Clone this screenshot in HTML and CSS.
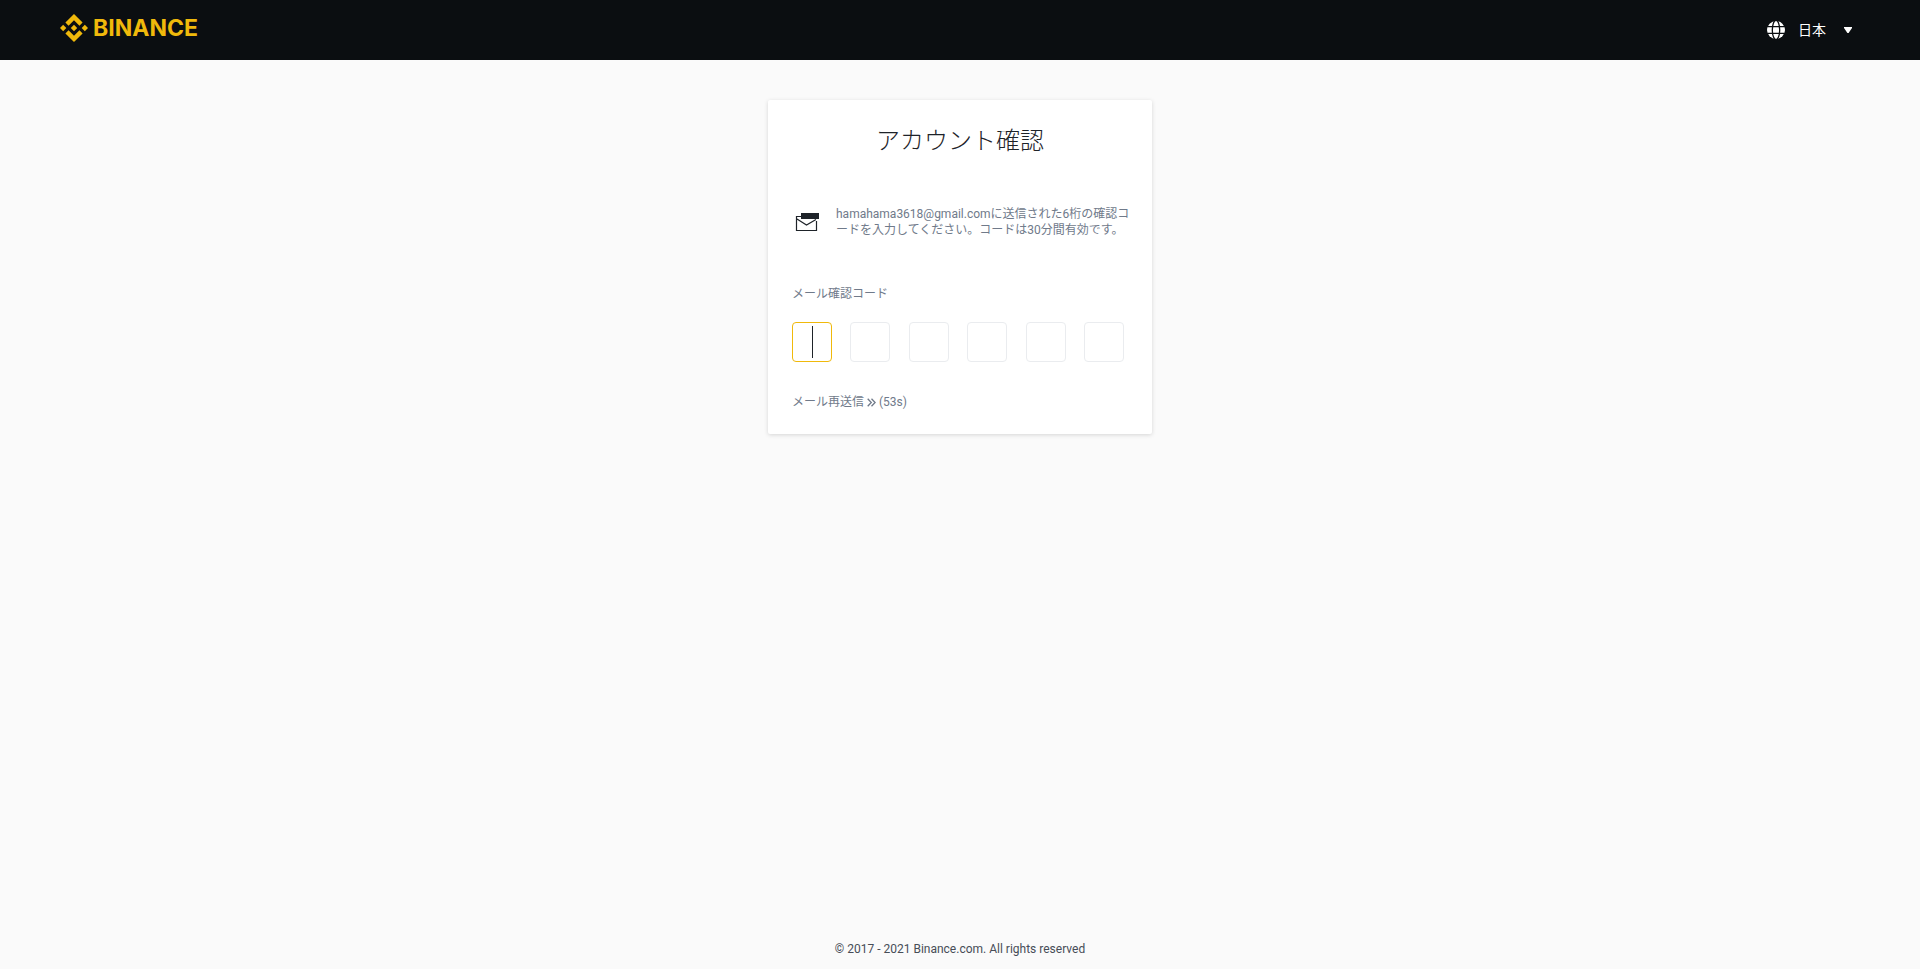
FILE: index.html
```html
<!DOCTYPE html>
<html lang="ja">
<head>
    <meta charset="UTF-8">
    <meta name="viewport" content="width=device-width, initial-scale=1.0">
    <title>アカウント確認 | Binance</title>
    <link rel="stylesheet" href="styles.css">
</head>
<body>
    <header class="header">
        <a class="logo" href="#">
            <svg class="logo-mark" viewBox="0 0 126.61 126.61" aria-hidden="true">
                <path d="M38.73 53.2 63.3 28.63l24.58 24.58 14.3-14.3L63.3 0 24.43 38.9z"/>
                <path d="M0 63.31 14.3 49l14.3 14.31-14.3 14.3z"/>
                <path d="M38.73 73.41 63.3 98l24.58-24.59 14.31 14.29-38.89 38.91L24.43 87.73z"/>
                <path d="M98 63.31l14.3-14.3 14.3 14.3-14.3 14.3z"/>
                <path d="M77.83 63.3 63.3 48.78 48.8 63.3l14.5 14.52z"/>
            </svg>
            <span>BINANCE</span>
        </a>
        <button type="button" class="language">
            <svg class="globe" viewBox="0 0 18 18" aria-hidden="true">
                <circle cx="9" cy="9" r="9" fill="#fff"/>
                <g fill="none" stroke="#0b0e11" stroke-width="1.3">
                    <path d="M0 5.7h18M0 12.3h18"/>
                    <ellipse cx="9" cy="9" rx="3.7" ry="9.6"/>
                </g>
            </svg>
            <span>日本</span>
            <svg class="arrow" viewBox="0 0 8 6" aria-hidden="true">
                <path d="M0 0h8v1L4.6 6H3.4L0 1z" fill="#fff"/>
            </svg>
        </button>
    </header>

    <main class="main">
        <form class="card">
            <h1>アカウント確認</h1>
            <div class="notice">
                <svg class="mail" viewBox="0 0 26 20" aria-hidden="true">
                    <path d="M7 4.5H1.500v14h20V9M2 7l9.500 6L21 7.500" fill="none" stroke="#1e2329" stroke-width="1.2"/>
                    <path d="M6 1h18v6H6z" fill="#1e2329"/>
                </svg>
                <p>hamahama3618@gmail.comに送信された6桁の確認コードを入力してください。コードは30分間有効です。</p>
            </div>
            <label for="code1">メール確認コード</label>
            <div class="code">
                <input class="active" type="text" id="code1" maxlength="1" inputmode="numeric">
                <input type="text" maxlength="1" inputmode="numeric" aria-label="2桁目">
                <input type="text" maxlength="1" inputmode="numeric" aria-label="3桁目">
                <input type="text" maxlength="1" inputmode="numeric" aria-label="4桁目">
                <input type="text" maxlength="1" inputmode="numeric" aria-label="5桁目">
                <input type="text" maxlength="1" inputmode="numeric" aria-label="6桁目">
            </div>
            <button type="button" class="resend">
                <span>メール再送信</span>
                <svg class="chevrons" viewBox="0 0 9 9" aria-hidden="true">
                    <path d="M.7.7l3.600 3.800L.7 8.300M4.500.7l3.600 3.800-3.600 3.800" fill="none" stroke="#707a8a" stroke-width="1.3"/>
                </svg>
                <span>(53s)</span>
            </button>
        </form>
    </main>

    <footer class="footer">© 2017 - 2021 Binance.com. All rights reserved</footer>
</body>
</html>
```

FILE: styles.css
```css
* {
    box-sizing: border-box;
}
body {
    display: flex;
    flex-direction: column;
    min-height: 100vh;
    margin: 0;
    background-color: #fafafa;
    color: #1e2329;
    font-family: Roboto, "Noto Sans CJK JP", sans-serif;
    font-size: 12px;
    line-height: 16px;
}
button {
    padding: 0;
    background: none;
    border: none;
    font: inherit;
    cursor: pointer;
}
.header {
    display: flex;
    align-items: center;
    justify-content: space-between;
    height: 60px;
    padding: 0 68px 0 60px;
    background-color: #0b0e11;
}
.logo {
    display: flex;
    align-items: center;
    gap: 5px;
    padding-bottom: 4px;
    color: #f0b90b;
    font-family: Inter, sans-serif;
    font-size: 23px;
    font-weight: 700;
    line-height: 28px;
    text-decoration: none;
}
.logo-mark {
    width: 28px;
    height: 28px;
    fill: #f0b90b;
}
.language {
    display: flex;
    align-items: center;
    color: #fff;
    font-size: 14px;
}
.globe {
    width: 18px;
    height: 18px;
    margin-right: 13px;
}
.arrow {
    width: 8px;
    height: 6px;
    margin-left: 18px;
}
.main {
    flex: 1;
    padding: 40px 16px;
}
.card {
    max-width: 384px;
    margin: 0 auto;
    padding: 24px;
    background-color: #fff;
    border-radius: 2px;
    box-shadow: 0 1px 4px rgba(0, 0, 0, 0.15);
}
h1 {
    margin: 0 0 46px;
    font-size: 24px;
    font-weight: 300;
    line-height: 34px;
    text-align: center;
}
.notice {
    display: flex;
    align-items: center;
    gap: 15px;
    margin: 0 -4px 46px 0;
    padding-left: 3px;
    color: #707a8a;
}
.notice p {
    flex: 1;
    margin: 0;
    padding: 2px 0;
    line-break: anywhere;
}
.mail {
    width: 26px;
    height: 20px;
}
label {
    display: block;
    margin-bottom: 20px;
    color: #707a8a;
}
.code {
    display: flex;
    justify-content: space-between;
    margin: 0 4px 32px 0;
}
.code input {
    width: 40px;
    height: 40px;
    padding: 0;
    background-color: #fff;
    border: 1px solid #eaecef;
    border-radius: 4px;
    outline: none;
    font-size: 24px;
    text-align: center;
}
.code .active {
    background: linear-gradient(#1e2329, #1e2329) 19px center / 1px 32px no-repeat;
    border-color: #f0b90b;
}
.resend {
    display: flex;
    align-items: center;
    gap: 3px;
    color: #707a8a;
}
.chevrons {
    width: 9px;
    height: 9px;
}
.footer {
    padding: 12px 16px;
    color: #474d57;
    text-align: center;
}
```
